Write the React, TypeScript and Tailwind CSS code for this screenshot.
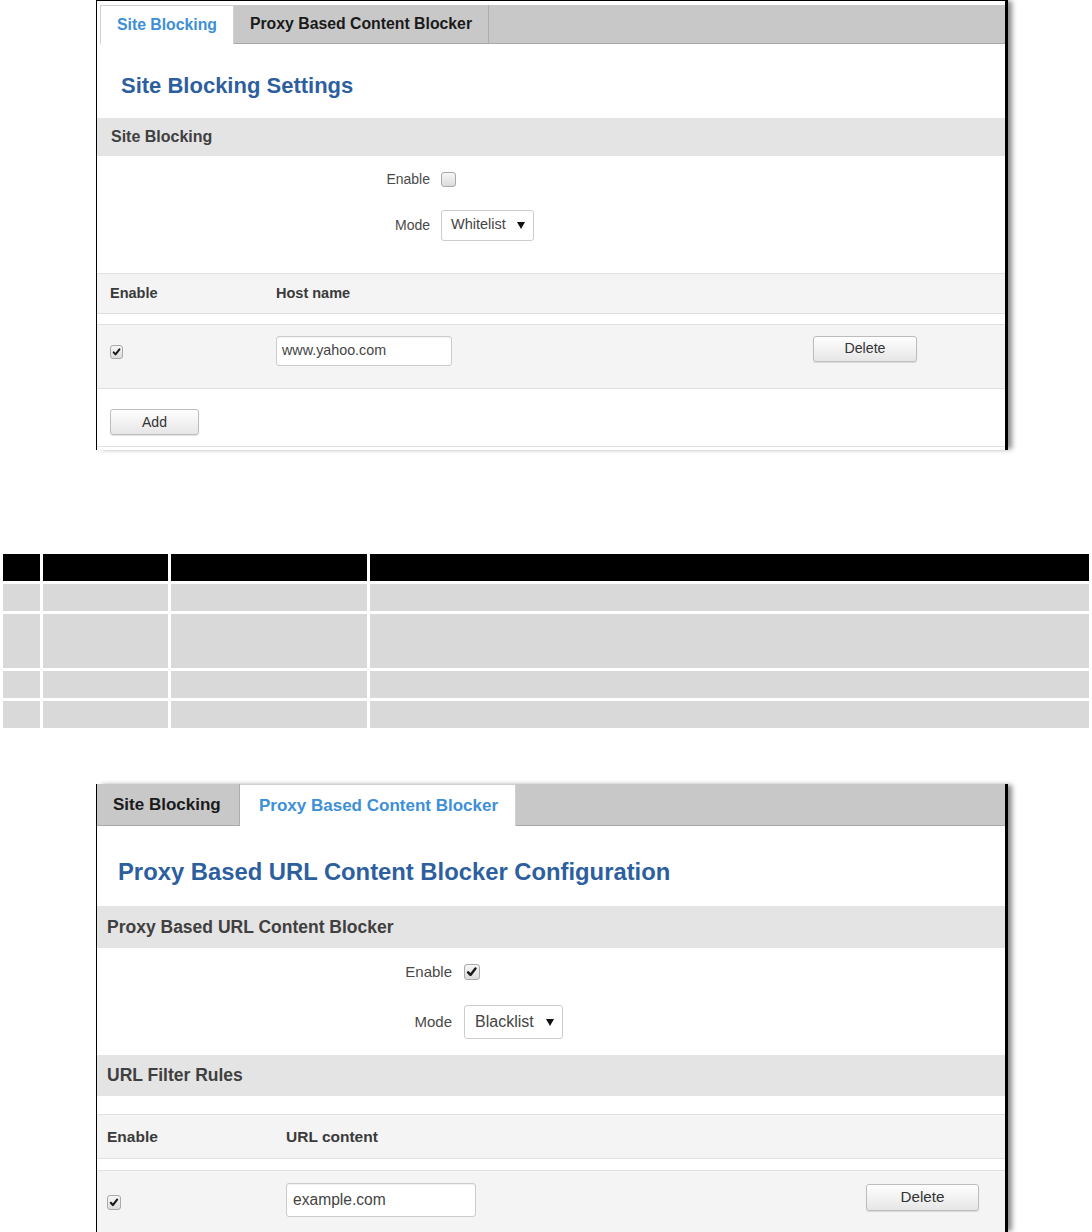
import type { ReactNode } from 'react'

type CheckboxProps = {
  checked?: boolean
  className: string
}

function Checkbox({ checked, className }: CheckboxProps) {
  return (
    <span
      className={`flex shrink-0 items-center justify-center rounded-[3px] border border-[#a9a9a9] bg-gradient-to-b from-[#f6f6f6] to-[#dcdcdc] ${className}`}
    >
      {checked && (
        <svg viewBox="0 0 12 12" className="h-[82%] w-[82%]">
          <path d="M2.2 6.6 L4.7 9.3 L9.9 2.6" fill="none" stroke="#1a1a1a" strokeWidth="2.6" strokeLinecap="round" strokeLinejoin="round" />
        </svg>
      )}
    </span>
  )
}

function SelectBox({ value, className }: { value: string; className: string }) {
  return (
    <div
      className={`flex items-center justify-between rounded-[3px] border border-[#cccccc] bg-white text-[#444] ${className}`}
    >
      <span>{value}</span>
      <svg width="8" height="7" viewBox="0 0 8 7">
        <polygon points="0,0 8,0 4,7" fill="#111" />
      </svg>
    </div>
  )
}

function GrayButton({ children, className }: { children: ReactNode; className: string }) {
  return (
    <button
      type="button"
      className={`flex items-center justify-center rounded-[3px] border border-[#bdbdbd] bg-gradient-to-b from-white to-[#e6e6e6] text-[#333] shadow-[0_1px_1px_rgba(0,0,0,0.12)] ${className}`}
    >
      {children}
    </button>
  )
}

function TextInput({ value, className }: { value: string; className: string }) {
  return (
    <div
      className={`flex items-center rounded-[3px] border border-[#cccccc] bg-white text-[#444] shadow-[inset_0_1px_1px_rgba(0,0,0,0.06)] ${className}`}
    >
      {value}
    </div>
  )
}

function SiteBlockingShot() {
  return (
    <div className="ml-[96px] h-[450px] w-[912px] overflow-hidden border-t border-r-[3px] border-l border-black bg-white pt-[4px] shadow-[5px_0_5px_-1px_rgba(0,0,0,0.45)]">
      {/* tabs */}
      <div className="ml-[3px] flex h-[39px] border-b border-[#a9a9a9] bg-[#c8c8c8]">
        <div className="-mb-px flex h-[39px] w-[134px] items-center justify-center border border-b-0 border-[#d0d0d0] bg-white text-[15.8px] font-bold text-[#3d8fd8]">
          Site Blocking
        </div>
        <div className="flex w-[255px] items-center justify-center border-r border-[#adadad] text-[15.8px] font-bold text-[#1a1a1a]">
          Proxy Based Content Blocker
        </div>
      </div>

      <h2 className="mt-[29px] mb-[19px] pl-[24px] text-[22px] leading-[26px] font-bold text-[#2d5f9f]">
        Site Blocking Settings
      </h2>

      <div className="flex h-[38px] items-center bg-[#e4e4e4] pl-[14px] text-[16px] font-bold text-[#404040]">
        Site Blocking
      </div>

      <div className="pt-[8px]">
        <div className="flex h-[30px] items-center">
          <span className="w-[333px] text-right text-[14px] text-[#4a4a4a]">Enable</span>
          <Checkbox className="ml-[11px] h-[15px] w-[15px]" />
        </div>
        <div className="mt-[12px] flex h-[38px] items-center">
          <span className="w-[333px] text-right text-[14px] text-[#4a4a4a]">Mode</span>
          <SelectBox value="Whitelist" className="ml-[11px] h-[31px] w-[93px] pr-[8px] pl-[9px] text-[14.5px]" />
        </div>
      </div>

      {/* rules table */}
      <div className="mt-[29px]">
        <div className="flex h-[41px] items-center border-y border-[#e0e0e0] bg-[#f4f4f4] text-[14.5px] font-bold text-[#3a3a3a]">
          <span className="w-[179px] pl-[13px]">Enable</span>
          <span>Host name</span>
        </div>
        <div className="h-[10px]" />
        <div className="flex h-[65px] items-start border-y border-[#e0e0e0] bg-[#f4f4f4] pt-[11px]">
          <div className="w-[179px] pt-[9px] pl-[13px]">
            <Checkbox checked className="h-[14px] w-[13px]" />
          </div>
          <div className="w-[537px]">
            <TextInput value="www.yahoo.com" className="h-[30px] w-[176px] pl-[5px] text-[14.3px]" />
          </div>
          <GrayButton className="h-[26px] w-[104px] text-[14.2px]">Delete</GrayButton>
        </div>
        <div className="h-[58px] border-b border-[#e0e0e0] pt-[20px] pl-[13px]">
          <GrayButton className="h-[26px] w-[89px] text-[14px]">Add</GrayButton>
        </div>
      </div>
    </div>
  )
}

function PlaceholderTable() {
  const rows = ['h-[27px]', 'h-[54px]', 'h-[27px]', 'h-[27px]']
  return (
    <div className="mt-[104px] ml-[3px] grid w-[1086px] grid-cols-[37px_125px_196px_1fr] gap-[3px]">
      <div className="h-[27px] bg-black" />
      <div className="h-[27px] bg-black" />
      <div className="h-[27px] bg-black" />
      <div className="h-[27px] bg-black" />
      {rows.map((height, index) => (
        <div key={index} className="contents">
          <div className={`${height} bg-[#d9d9d9]`} />
          <div className={`${height} bg-[#d9d9d9]`} />
          <div className={`${height} bg-[#d9d9d9]`} />
          <div className={`${height} bg-[#d9d9d9]`} />
        </div>
      ))}
    </div>
  )
}

function ContentBlockerShot() {
  return (
    <div className="mt-[56px] ml-[96px] h-[448px] w-[912px] overflow-hidden border-r-[3px] border-l border-black bg-white shadow-[5px_0_5px_-1px_rgba(0,0,0,0.45)]">
      {/* tabs */}
      <div className="flex h-[42px] border-b border-[#a9a9a9] bg-[#c8c8c8]">
        <div className="flex w-[143px] items-center border-r border-[#adadad] pl-[16px] text-[17px] font-bold text-[#1a1a1a]">
          Site Blocking
        </div>
        <div className="-mb-px flex h-[42px] w-[276px] items-center border border-b-0 border-l-0 border-[#d0d0d0] bg-white pl-[19px] text-[17px] font-bold text-[#3d8fd8]">
          Proxy Based Content Blocker
        </div>
      </div>

      <h2 className="mt-[32px] mb-[20px] pl-[21px] text-[23.8px] leading-[28px] font-bold text-[#2d5f9f]">
        Proxy Based URL Content Blocker Configuration
      </h2>

      <div className="flex h-[42px] items-center bg-[#e4e4e4] pl-[10px] text-[17.5px] font-bold text-[#404040]">
        Proxy Based URL Content Blocker
      </div>

      <div className="pt-[8px]">
        <div className="flex h-[32px] items-center">
          <span className="w-[355px] text-right text-[15px] text-[#4a4a4a]">Enable</span>
          <Checkbox checked className="ml-[12px] h-[16px] w-[16px]" />
        </div>
        <div className="mt-[15px] flex h-[38px] items-center">
          <span className="w-[355px] text-right text-[15px] text-[#4a4a4a]">Mode</span>
          <SelectBox value="Blacklist" className="ml-[12px] h-[34px] w-[99px] pr-[8px] pl-[10px] text-[16px]" />
        </div>
      </div>

      <div className="mt-[14px] flex h-[41px] items-center bg-[#e4e4e4] pl-[10px] text-[17.5px] font-bold text-[#404040]">
        URL Filter Rules
      </div>

      {/* rules table */}
      <div className="mt-[18px]">
        <div className="flex h-[45px] items-center border-y border-[#e0e0e0] bg-[#f4f4f4] text-[15.5px] font-bold text-[#3a3a3a]">
          <span className="w-[189px] pl-[10px]">Enable</span>
          <span>URL content</span>
        </div>
        <div className="h-[11px]" />
        <div className="flex h-[70px] items-start border-y border-[#e0e0e0] bg-[#f4f4f4] pt-[12px]">
          <div className="w-[189px] pt-[12px] pl-[10px]">
            <Checkbox checked className="h-[15px] w-[14px]" />
          </div>
          <div className="w-[580px]">
            <TextInput value="example.com" className="h-[34px] w-[190px] pl-[6px] text-[15.6px]" />
          </div>
          <GrayButton className="mt-[1px] h-[27px] w-[113px] text-[15.2px]">Delete</GrayButton>
        </div>
      </div>
    </div>
  )
}

export default function App() {
  return (
    <div className="min-h-[1232px] w-[1092px] bg-white [font-family:'Liberation_Sans',Arial,sans-serif]">
      <SiteBlockingShot />
      <PlaceholderTable />
      <ContentBlockerShot />
    </div>
  )
}
